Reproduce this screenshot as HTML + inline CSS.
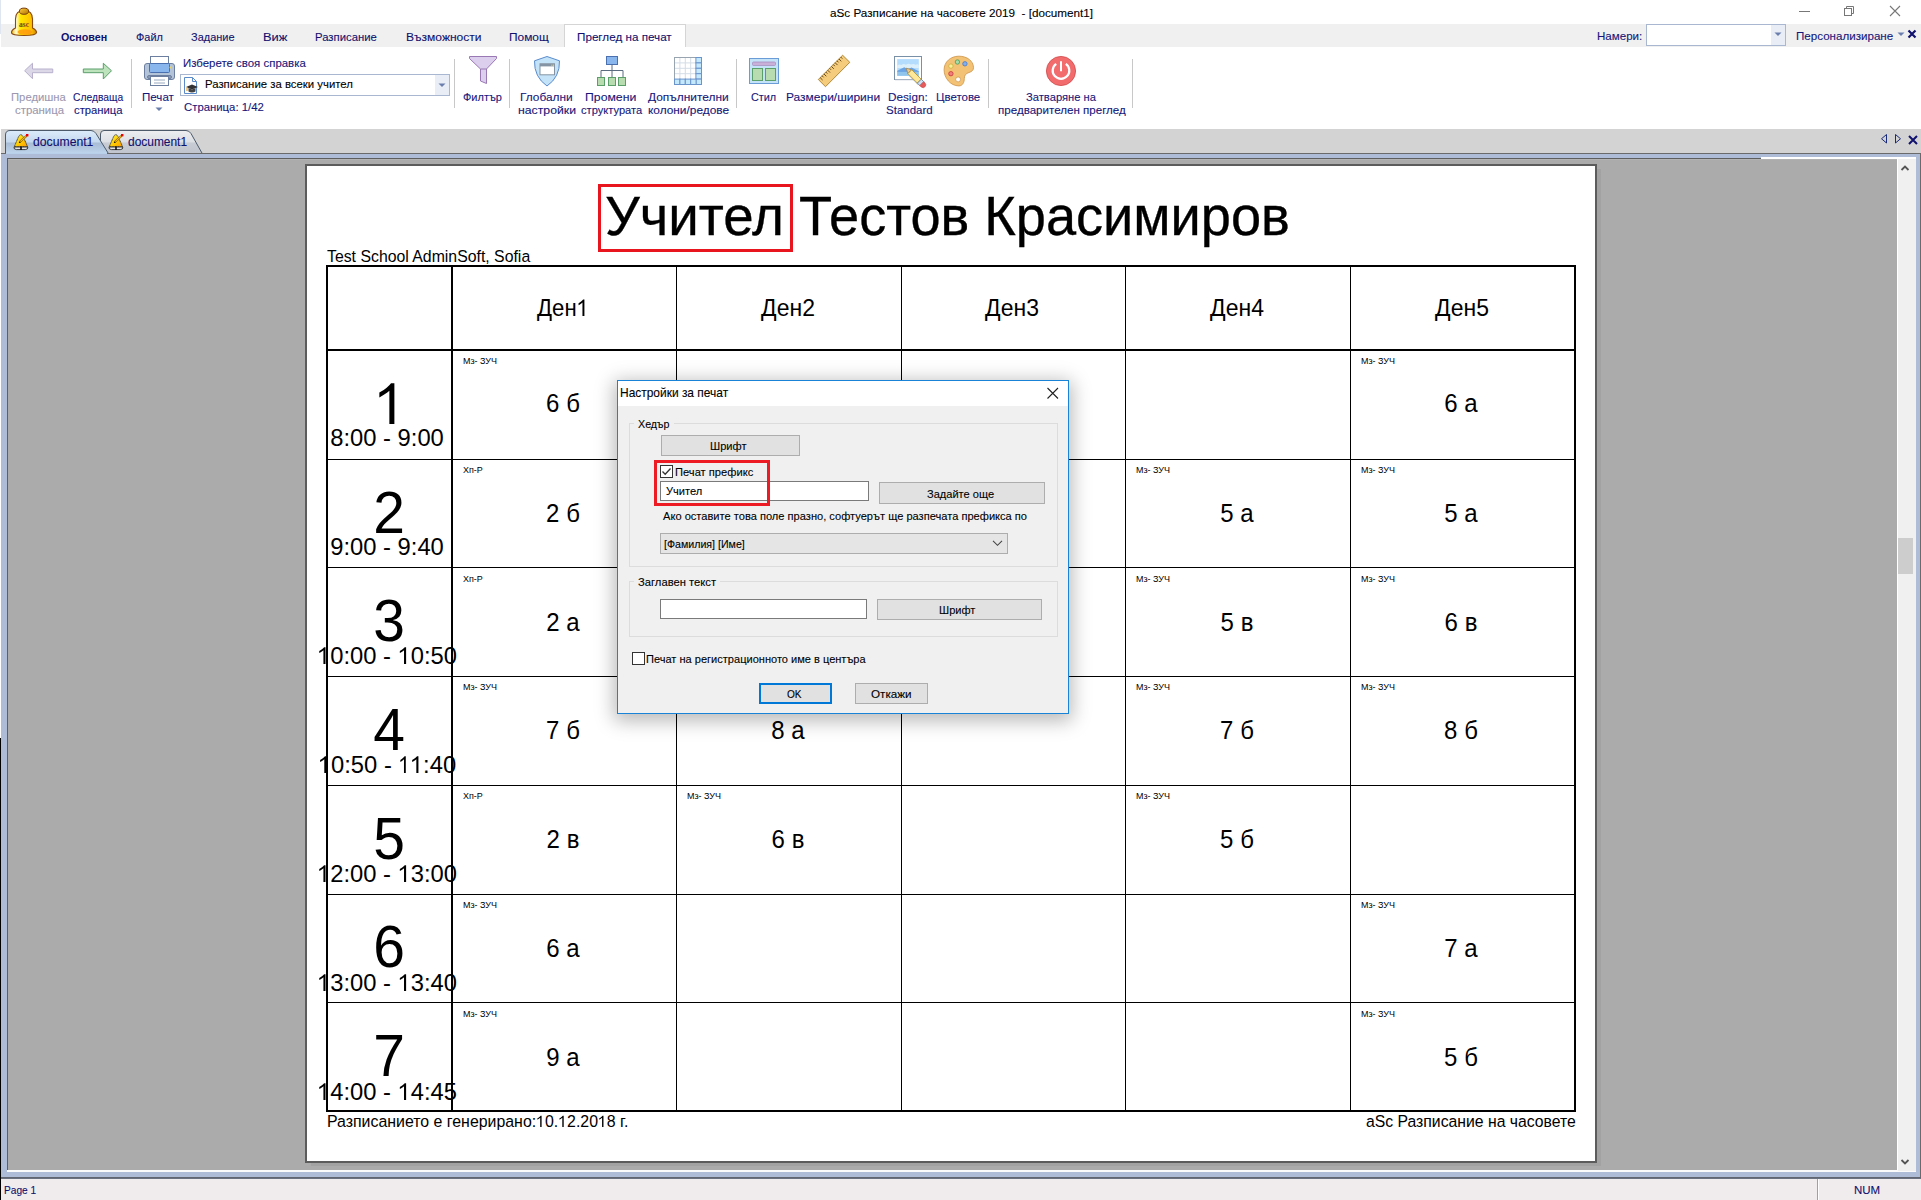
<!DOCTYPE html><html><head><meta charset="utf-8"><style>
html,body{margin:0;padding:0;width:1921px;height:1200px;overflow:hidden;background:#fff;}
body{position:relative;font-family:"Liberation Sans", sans-serif;}
.t{position:absolute;white-space:nowrap;}
.r{position:absolute;box-sizing:border-box;}
.one{color:transparent;}
</style></head><body>
<div class="r" style="left:0px;top:0px;width:1921px;height:24px;background:#fff"></div>
<div class="r" style="left:0px;top:0px;width:1px;height:34px;background:#dfe6ef"></div>
<div class="t" style="left:829.6px;top:7px;font-size:11.7px;line-height:11.7px;color:#000;font-weight:normal;transform:scaleX(1.0006);transform-origin:left center;-webkit-text-stroke:0.1px currentColor;">aSc Разписание на часовете 2019&nbsp; - [document1]</div>
<div class="r" style="left:1799px;top:11px;width:11px;height:1px;background:#777"></div>
<svg class="r" style="left:1843px;top:5px;" width="12" height="12" viewBox="0 0 12 12"><rect x="1.5" y="3.5" width="7" height="7" fill="none" stroke="#777"/><path d="M3.5 3.5V1.5H10.5V8.5H8.5" fill="none" stroke="#777"/></svg>
<svg class="r" style="left:1889px;top:5px;" width="12" height="12" viewBox="0 0 12 12"><path d="M1 1L11 11M11 1L1 11" stroke="#777" stroke-width="1.1"/></svg>
<div class="r" style="left:1px;top:24px;width:1920px;height:23px;background:#f0f0f0"></div>
<div class="r" style="left:564px;top:24px;width:122px;height:23px;background:#fff;border:1px solid #d5d5d5;border-bottom:none"></div>
<div class="t" style="left:61.0px;top:32px;font-size:11.3px;line-height:11.3px;color:#10106e;font-weight:bold;transform:scaleX(0.9500);transform-origin:left center;">Основен</div>
<div class="t" style="left:135.6px;top:32px;font-size:11.3px;line-height:11.3px;color:#10106e;font-weight:normal;transform:scaleX(0.9667);transform-origin:left center;-webkit-text-stroke:0.1px currentColor;">Файл</div>
<div class="t" style="left:191.0px;top:32px;font-size:11.3px;line-height:11.3px;color:#10106e;font-weight:normal;transform:scaleX(0.9711);transform-origin:left center;-webkit-text-stroke:0.1px currentColor;">Задание</div>
<div class="t" style="left:263.26px;top:32px;font-size:11.3px;line-height:11.3px;color:#10106e;font-weight:normal;transform:scaleX(1.1400);transform-origin:left center;-webkit-text-stroke:0.1px currentColor;">Виж</div>
<div class="t" style="left:315.3983606557377px;top:32px;font-size:11.3px;line-height:11.3px;color:#10106e;font-weight:normal;transform:scaleX(1.0016);transform-origin:left center;-webkit-text-stroke:0.1px currentColor;">Разписание</div>
<div class="t" style="left:405.9347826086956px;top:32px;font-size:11.3px;line-height:11.3px;color:#10106e;font-weight:normal;transform:scaleX(1.0652);transform-origin:left center;-webkit-text-stroke:0.1px currentColor;">Възможности</div>
<div class="t" style="left:508.94594594594594px;top:32px;font-size:11.3px;line-height:11.3px;color:#10106e;font-weight:normal;transform:scaleX(1.0541);transform-origin:left center;-webkit-text-stroke:0.1px currentColor;">Помощ</div>
<div class="t" style="left:576.967032967033px;top:32px;font-size:11.3px;line-height:11.3px;color:#10106e;font-weight:normal;transform:scaleX(1.0330);transform-origin:left center;-webkit-text-stroke:0.1px currentColor;">Преглед на печат</div>
<div class="t" style="left:1596.9767441860465px;top:31px;font-size:11.3px;line-height:11.3px;color:#16167a;font-weight:normal;transform:scaleX(1.0233);transform-origin:left center;-webkit-text-stroke:0.1px currentColor;">Намери:</div>
<div class="r" style="left:1646px;top:24px;width:140px;height:22px;background:#fff;border:1px solid #a9b7d1"></div>
<div class="r" style="left:1771px;top:25px;width:14px;height:20px;background:#e9edf5"></div>
<svg class="r" style="left:1774px;top:32px;" width="8" height="5" viewBox="0 0 8 5"><path d="M0.5 0.5H7.5L4 4Z" fill="#6b7fae"/></svg>
<div class="t" style="left:1796.4868421052631px;top:31px;font-size:11.45px;line-height:11.45px;color:#16167a;font-weight:normal;transform:scaleX(1.0132);transform-origin:left center;-webkit-text-stroke:0.1px currentColor;">Персонализиране</div>
<svg class="r" style="left:1897px;top:32px;" width="8" height="5" viewBox="0 0 8 5"><path d="M0.5 0.5H7.5L4 4Z" fill="#6b7fae"/></svg>
<svg class="r" style="left:1907px;top:29px;" width="10" height="10" viewBox="0 0 10 10"><path d="M1.5 1.5L8.5 8.5M8.5 1.5L1.5 8.5" stroke="#10106e" stroke-width="2.2"/></svg>
<svg class="r" style="left:8px;top:4px;" width="32" height="36" viewBox="0 0 32 36">
<defs>
<linearGradient id="bb" x1="0" y1="0" x2="1" y2="0"><stop offset="0" stop-color="#e8b800"/><stop offset="0.18" stop-color="#fffbe0"/><stop offset="0.35" stop-color="#ffe800"/><stop offset="0.8" stop-color="#ffc000"/><stop offset="1" stop-color="#d08800"/></linearGradient>
<linearGradient id="bk" x1="0" y1="0" x2="1" y2="1"><stop offset="0" stop-color="#ffd040"/><stop offset="1" stop-color="#b07000"/></linearGradient>
</defs>
<path d="M7.5 24V15Q7.5 6.5 16 6.5Q24.5 6.5 24.5 15V24Q28.5 26 28.5 28.5Q28.5 31.5 16 31.5Q3.5 31.5 3.5 28.5Q3.5 26 7.5 24Z" fill="url(#bb)" stroke="#8a4a10" stroke-width="1.1"/>
<ellipse cx="17" cy="28" rx="7.5" ry="2.8" fill="#ff9a10" opacity="0.85"/>
<ellipse cx="16" cy="7.2" rx="4.6" ry="3.1" fill="url(#bk)" stroke="#7a4010" stroke-width="1"/>
<text x="16" y="22.6" font-family="Liberation Serif" font-size="7.5" font-weight="bold" fill="#7a4818" text-anchor="middle">asc</text></svg>
<svg class="r" style="left:22px;top:60px;" width="34" height="22" viewBox="0 0 34 22"><path d="M2.6 10.75L10.5 3.25V9H30.75V12.7H10.5V18.7Z" fill="#dcd8e8" stroke="#b8b0cc" stroke-width="1"/></svg>
<svg class="r" style="left:80px;top:60px;" width="34" height="22" viewBox="0 0 34 22"><path d="M31.5 10.75L23.3 3.25V9H3.3V12.7H23.3V19Z" fill="#bde3bd" stroke="#5a9e6a" stroke-width="1"/></svg>
<div class="t" style="left:10.50909090909091px;top:92px;font-size:11.4px;line-height:11.4px;color:#9c98b0;font-weight:normal;transform:scaleX(0.9909);transform-origin:left center;-webkit-text-stroke:0.1px currentColor;">Предишна</div>
<div class="t" style="left:15.0px;top:105px;font-size:11.4px;line-height:11.4px;color:#9c98b0;font-weight:normal;-webkit-text-stroke:0.1px currentColor;">страница</div>
<div class="t" style="left:72.5px;top:92px;font-size:11.4px;line-height:11.4px;color:#16167a;font-weight:normal;transform:scaleX(0.9018);transform-origin:left center;-webkit-text-stroke:0.1px currentColor;">Следваща</div>
<div class="t" style="left:74.0px;top:105px;font-size:11.4px;line-height:11.4px;color:#16167a;font-weight:normal;transform:scaleX(0.9898);transform-origin:left center;-webkit-text-stroke:0.1px currentColor;">страница</div>
<div class="r" style="left:131px;top:59px;width:1px;height:49px;background:#c8c8c8"></div>
<svg class="r" style="left:143px;top:55px;" width="33" height="32" viewBox="0 0 33 32">
<rect x="7.5" y="1.5" width="18" height="8" fill="#fff" stroke="#6c7fa0"/>
<rect x="1.5" y="8.5" width="30" height="16" rx="2.5" fill="#b4c4d8" stroke="#6c7fa0"/>
<rect x="6.5" y="8.5" width="20" height="9" rx="1" fill="#8ab6ee" stroke="#4a70b0"/>
<rect x="4.5" y="20.5" width="24" height="3" rx="1.5" fill="#8a9ab0" stroke="#6c7fa0"/>
<rect x="7.5" y="21.5" width="18" height="9" fill="#fff" stroke="#6c7fa0"/>
<path d="M11 25H22M11 28H22" stroke="#9aaac0" stroke-width="1"/>
<circle cx="27.5" cy="12.5" r="1" fill="#f4d45a"/></svg>
<div class="t" style="left:142.48387096774192px;top:92px;font-size:11.4px;line-height:11.4px;color:#16167a;font-weight:normal;transform:scaleX(1.0161);transform-origin:left center;-webkit-text-stroke:0.1px currentColor;">Печат</div>
<svg class="r" style="left:155px;top:107px;" width="8" height="5" viewBox="0 0 8 5"><path d="M0.5 0.5H7.5L4 4Z" fill="#6b7fae"/></svg>
<div class="t" style="left:183.41370967741935px;top:57px;font-size:11.6px;line-height:11.6px;color:#16167a;font-weight:normal;transform:scaleX(0.9863);transform-origin:left center;-webkit-text-stroke:0.1px currentColor;">Изберете своя справка</div>
<div class="r" style="left:180px;top:74px;width:270px;height:22px;background:#fff;border:1px solid #a9b7d1"></div>
<div class="r" style="left:435px;top:75px;width:14px;height:20px;background:#e9edf5"></div>
<svg class="r" style="left:438px;top:83px;" width="8" height="5" viewBox="0 0 8 5"><path d="M0.5 0.5H7.5L4 4Z" fill="#6b7fae"/></svg>
<svg class="r" style="left:183px;top:77px;" width="17" height="17" viewBox="0 0 17 17">
<path d="M1.5 0.5H9.5L13.5 4.5V16.5H1.5Z" fill="#fff" stroke="#5a8ccc"/>
<path d="M9.5 0.5V4.5H13.5" fill="none" stroke="#5a8ccc"/>
<path d="M3 10L9 7.5L15 10L9 12.5Z" fill="#333"/>
<path d="M5.5 11V14.5Q9 16.5 12.5 14.5V11L9 12.5Z" fill="#444"/>
<path d="M4 10.5V14" stroke="#f0a020" stroke-width="1.2"/></svg>
<div class="t" style="left:204.59383561643835px;top:79px;font-size:11.3px;line-height:11.3px;color:#000;font-weight:normal;transform:scaleX(1.0062);transform-origin:left center;-webkit-text-stroke:0.1px currentColor;">Разписание за всеки учител</div>
<div class="t" style="left:184.4px;top:102px;font-size:11.3px;line-height:11.3px;color:#16167a;font-weight:normal;transform:scaleX(1.0044);transform-origin:left center;-webkit-text-stroke:0.1px currentColor;">Страница: 1/42</div>
<div class="r" style="left:454px;top:59px;width:1px;height:49px;background:#c8c8c8"></div>
<svg class="r" style="left:466px;top:54px;" width="34" height="34" viewBox="0 0 34 34">
<path d="M3.5 2.5H30.5V4.5L20.5 15V29.5L14.5 27V15L3.5 4.5Z" fill="#dccfee" stroke="#9a78b4"/>
<path d="M14.5 15H20.5" stroke="#9a78b4"/></svg>
<div class="t" style="left:462.8px;top:92px;font-size:11.4px;line-height:11.4px;color:#16167a;font-weight:normal;transform:scaleX(0.9650);transform-origin:left center;-webkit-text-stroke:0.1px currentColor;">Филтър</div>
<div class="r" style="left:509px;top:59px;width:1px;height:49px;background:#c8c8c8"></div>
<svg class="r" style="left:532px;top:54px;" width="30" height="34" viewBox="0 0 30 34">
<path d="M15 2.5L27.5 6.8Q28 23 15 32Q2 23 2.5 6.8Z" fill="#c4e2f8" stroke="#5a8ccc"/>
<rect x="8" y="9.8" width="14.5" height="11" fill="#fff" stroke="#8494a4"/>
<rect x="8" y="9.8" width="14.5" height="2.6" fill="#8494a4"/>
<rect x="19.4" y="10.6" width="1" height="1.2" fill="#e8d870"/><rect x="21" y="10.6" width="1" height="1.2" fill="#e8d870"/></svg>
<div class="t" style="left:519.9591836734694px;top:92px;font-size:11.4px;line-height:11.4px;color:#16167a;font-weight:normal;transform:scaleX(1.0408);transform-origin:left center;-webkit-text-stroke:0.1px currentColor;">Глобални</div>
<div class="t" style="left:518.0px;top:105px;font-size:11.4px;line-height:11.4px;color:#16167a;font-weight:normal;transform:scaleX(1.0755);transform-origin:left center;-webkit-text-stroke:0.1px currentColor;">настройки</div>
<svg class="r" style="left:596px;top:54px;" width="32" height="34" viewBox="0 0 32 34">
<rect x="10.5" y="2.5" width="11" height="8" fill="#8ab6ee" stroke="#4a70b0"/>
<path d="M16 10.5V23M5 23V16.5H27V23" fill="none" stroke="#5c6c80" stroke-width="1"/>
<rect x="1.5" y="23.5" width="7" height="8" fill="#b8dcb0" stroke="#5a9e6a"/>
<rect x="12.5" y="23.5" width="7" height="8" fill="#b8dcb0" stroke="#5a9e6a"/>
<rect x="22.5" y="23.5" width="7" height="8" fill="#b8dcb0" stroke="#5a9e6a"/></svg>
<div class="t" style="left:585.1739130434783px;top:92px;font-size:11.4px;line-height:11.4px;color:#16167a;font-weight:normal;transform:scaleX(1.0761);transform-origin:left center;-webkit-text-stroke:0.1px currentColor;">Промени</div>
<div class="t" style="left:580.5px;top:105px;font-size:11.4px;line-height:11.4px;color:#16167a;font-weight:normal;transform:scaleX(0.9762);transform-origin:left center;-webkit-text-stroke:0.1px currentColor;">структурата</div>
<svg class="r" style="left:674px;top:57px;" width="28" height="28" viewBox="0 0 28 28"><rect x="0.5" y="0.5" width="27" height="27" fill="#fff" stroke="#98a4b0"/><path d="M5.9 1V22M1 5.9H22" stroke="#d4dde6" stroke-width="1"/><path d="M11.3 1V22M1 11.3H22" stroke="#d4dde6" stroke-width="1"/><path d="M16.7 1V22M1 16.7H22" stroke="#d4dde6" stroke-width="1"/><rect x="21.9" y="0.5" width="5.6" height="5.4" fill="#c4e8fc" stroke="#6a94cc" stroke-width="1"/><rect x="21.9" y="5.9" width="5.6" height="5.4" fill="#c4e8fc" stroke="#6a94cc" stroke-width="1"/><rect x="21.9" y="11.3" width="5.6" height="5.4" fill="#c4e8fc" stroke="#6a94cc" stroke-width="1"/><rect x="21.9" y="16.7" width="5.6" height="5.4" fill="#c4e8fc" stroke="#6a94cc" stroke-width="1"/><rect x="21.9" y="22.1" width="5.6" height="5.4" fill="#c4e8fc" stroke="#6a94cc" stroke-width="1"/><rect x="0.5" y="22.1" width="5.4" height="5.4" fill="#c4e8fc" stroke="#6a94cc" stroke-width="1"/><rect x="5.9" y="22.1" width="5.4" height="5.4" fill="#c4e8fc" stroke="#6a94cc" stroke-width="1"/><rect x="11.3" y="22.1" width="5.4" height="5.4" fill="#c4e8fc" stroke="#6a94cc" stroke-width="1"/><rect x="16.7" y="22.1" width="5.4" height="5.4" fill="#c4e8fc" stroke="#6a94cc" stroke-width="1"/></svg>
<div class="t" style="left:647.5px;top:92px;font-size:11.4px;line-height:11.4px;color:#16167a;font-weight:normal;transform:scaleX(1.0455);transform-origin:left center;-webkit-text-stroke:0.1px currentColor;">Допълнителни</div>
<div class="t" style="left:647.5px;top:105px;font-size:11.4px;line-height:11.4px;color:#16167a;font-weight:normal;transform:scaleX(1.0417);transform-origin:left center;-webkit-text-stroke:0.1px currentColor;">колони/редове</div>
<div class="r" style="left:736px;top:59px;width:1px;height:49px;background:#c8c8c8"></div>
<svg class="r" style="left:748px;top:57px;" width="32" height="28" viewBox="0 0 32 28">
<rect x="1.5" y="1.5" width="29" height="25" fill="#c4e2f8" stroke="#6a9cd8"/>
<rect x="4.5" y="5" width="23" height="3.5" rx="1" fill="#c8b0d8" stroke="#a890c0" stroke-width="0.8"/>
<rect x="4.5" y="11.5" width="10" height="12" fill="#b8dcb0" stroke="#5a9e6a"/>
<rect x="17.5" y="11.5" width="10" height="12" fill="#b8dcb0" stroke="#5a9e6a"/></svg>
<div class="t" style="left:751.0px;top:92px;font-size:11.4px;line-height:11.4px;color:#16167a;font-weight:normal;transform:scaleX(0.9519);transform-origin:left center;-webkit-text-stroke:0.1px currentColor;">Стил</div>
<svg class="r" style="left:817px;top:54px;" width="34" height="35" viewBox="0 0 34 35"><path d="M1.3 25.5L25.6 1.2L32.8 8.3L8.5 32.7Z" fill="#f4cc7c" stroke="#a88030" stroke-width="0.9"/><path d="M3.17 23.63l2.40 2.40" stroke="#6a4818" stroke-width="1"/><path d="M5.04 21.76l1.56 1.56" stroke="#6a4818" stroke-width="1"/><path d="M6.91 19.89l2.40 2.40" stroke="#6a4818" stroke-width="1"/><path d="M8.78 18.02l1.56 1.56" stroke="#6a4818" stroke-width="1"/><path d="M10.65 16.15l2.40 2.40" stroke="#6a4818" stroke-width="1"/><path d="M12.52 14.28l1.56 1.56" stroke="#6a4818" stroke-width="1"/><path d="M14.38 12.42l2.40 2.40" stroke="#6a4818" stroke-width="1"/><path d="M16.25 10.55l1.56 1.56" stroke="#6a4818" stroke-width="1"/><path d="M18.12 8.68l2.40 2.40" stroke="#6a4818" stroke-width="1"/><path d="M19.99 6.81l1.56 1.56" stroke="#6a4818" stroke-width="1"/><path d="M21.86 4.94l2.40 2.40" stroke="#6a4818" stroke-width="1"/><path d="M23.73 3.07l1.56 1.56" stroke="#6a4818" stroke-width="1"/></svg>
<div class="t" style="left:786.4488636363636px;top:92px;font-size:11.4px;line-height:11.4px;color:#16167a;font-weight:normal;transform:scaleX(1.0511);transform-origin:left center;-webkit-text-stroke:0.1px currentColor;">Размери/ширини</div>
<svg class="r" style="left:885px;top:50px;" width="45" height="42" viewBox="0 0 45 42">
<rect x="9.5" y="6.5" width="27" height="23" fill="#fff" stroke="#7890a8"/>
<rect x="10" y="29" width="27" height="1.2" fill="#a8b4c4"/>
<rect x="12.2" y="9.1" width="21.6" height="16.7" fill="#b4dcfc"/>
<path d="M12.2 15.5Q14.5 13.6 16.5 15Q18.5 13.2 21 14.8Q23.5 13 26 14.6Q28.5 13.2 30.5 14.8Q32.5 13.6 33.8 15V18H12.2Z" fill="#dcf0fc"/>
<path d="M12.2 20.8L19.3 17.2L22.8 19.2L26.5 17.4L33.8 21.2V22H12.2Z" fill="#6aa4e4"/>
<rect x="12.2" y="21.9" width="21.6" height="3.9" fill="#90c4ec"/>
<path d="M23.5 25.8L33 35.3L36.5 31.8L33.8 29.1V25.8Z" fill="#a0b0c0" opacity="0.55"/>
<path d="M21.3 18.2L22.86 23.64L26.74 19.76Z" fill="#f4c888" stroke="#a08040" stroke-width="0.7"/>
<path d="M22.86 23.64L32.36 33.14L36.24 29.26L26.74 19.76Z" fill="#fce898" stroke="#b09030" stroke-width="0.8"/>
<path d="M32.36 33.14L34.86 35.64L38.74 31.76L36.24 29.26Z" fill="#d0e0f4" stroke="#607890" stroke-width="0.8"/>
<path d="M34.86 35.64L36.2 37Q38.5 38.6 40.2 36.6Q41.6 34.6 40 33L38.74 31.76Z" fill="#e85a5a" stroke="#c04040" stroke-width="0.6"/></svg>
<div class="t" style="left:888.472972972973px;top:92px;font-size:11.4px;line-height:11.4px;color:#16167a;font-weight:normal;transform:scaleX(1.0270);transform-origin:left center;-webkit-text-stroke:0.1px currentColor;">Design:</div>
<div class="t" style="left:885.5px;top:105px;font-size:11.4px;line-height:11.4px;color:#16167a;font-weight:normal;transform:scaleX(1.0109);transform-origin:left center;-webkit-text-stroke:0.1px currentColor;">Standard</div>
<svg class="r" style="left:942px;top:54px;" width="34" height="34" viewBox="0 0 34 34">
<path d="M16.9 2.2C25 2.2 31.5 7 31.5 13.7C31.5 16.2 29.8 17.6 27 18.5C24 19.5 22.3 21 22.3 24.5C22.3 28 20.8 31.9 16.9 31.9C8.5 31.9 2.1 24 2.1 15.8C2.1 8 8.5 2.2 16.9 2.2Z" fill="#f4c274" stroke="#d09a50" stroke-width="0.9"/>
<circle cx="15.4" cy="8" r="2.2" fill="#a8dca8" stroke="#4a9a5a" stroke-width="0.8"/>
<circle cx="22.9" cy="9.8" r="2.2" fill="#80aef0" stroke="#4a78c8" stroke-width="0.8"/>
<circle cx="8.9" cy="12.1" r="2.2" fill="#f8f098" stroke="#c8b040" stroke-width="0.8"/>
<circle cx="8.9" cy="19.7" r="2.2" fill="#f08080" stroke="#c83838" stroke-width="0.8"/>
<circle cx="16.1" cy="25.4" r="2.5" fill="#fff" stroke="#d09a50" stroke-width="0.8"/></svg>
<div class="t" style="left:936.4941860465116px;top:92px;font-size:11.4px;line-height:11.4px;color:#16167a;font-weight:normal;transform:scaleX(1.0058);transform-origin:left center;-webkit-text-stroke:0.1px currentColor;">Цветове</div>
<div class="r" style="left:988px;top:59px;width:1px;height:49px;background:#c8c8c8"></div>
<svg class="r" style="left:1045px;top:55px;" width="32" height="32" viewBox="0 0 32 32">
<circle cx="16" cy="16" r="14.6" fill="#f26c6e" stroke="#d04848" stroke-width="0.8"/>
<path d="M11.2 8.8A8.3 8.3 0 1 0 20.8 8.8" fill="none" stroke="#fff" stroke-width="2.2"/>
<path d="M16 6.2V16.2" stroke="#fff" stroke-width="2"/></svg>
<div class="t" style="left:1026.0px;top:92px;font-size:11.4px;line-height:11.4px;color:#16167a;font-weight:normal;transform:scaleX(0.9826);transform-origin:left center;-webkit-text-stroke:0.1px currentColor;">Затваряне на</div>
<div class="t" style="left:997.5px;top:105px;font-size:11.4px;line-height:11.4px;color:#16167a;font-weight:normal;transform:scaleX(1.0159);transform-origin:left center;-webkit-text-stroke:0.1px currentColor;">предварителен преглед</div>
<div class="r" style="left:1132px;top:59px;width:1px;height:49px;background:#c8c8c8"></div>
<div class="r" style="left:1px;top:129px;width:1920px;height:24px;background:#d3d3d3"></div>
<div class="r" style="left:0px;top:47px;width:1px;height:106px;background:#fff"></div>
<svg class="r" style="left:98px;top:129px;" width="108" height="26" viewBox="0 0 108 26">
<defs><linearGradient id="g2" x1="0" y1="0" x2="0" y2="1">
<stop offset="0" stop-color="#eceef0"/><stop offset="0.5" stop-color="#dcdfe4"/><stop offset="0.52" stop-color="#c8ccd4"/><stop offset="1" stop-color="#c0c5ce"/></defs>
<path d="M2.5 25V5Q2.5 1.5 6 1.5H88Q91 1.5 93 4.5L104.5 25Z" fill="url(#g2)" stroke="#4c5a6a" stroke-width="1"/></svg>
<svg class="r" style="left:4px;top:129px;" width="108" height="27" viewBox="0 0 108 27">
<defs><linearGradient id="g1" x1="0" y1="0" x2="0" y2="1">
<stop offset="0" stop-color="#dcecfc"/><stop offset="0.48" stop-color="#c4d8ee"/><stop offset="0.5" stop-color="#a8bcd4"/><stop offset="1" stop-color="#c0d8f0"/></defs>
<path d="M1.5 26V6Q1.5 1.5 6 1.5H87Q90 1.5 92 4.5L105 25.5V26Z" fill="url(#g1)" stroke="#4c5a6a" stroke-width="1"/></svg>
<div class="t" style="left:32.5px;top:136px;font-size:12.0px;line-height:12.0px;color:#10106e;font-weight:normal;transform:scaleX(1.0169);transform-origin:left center;-webkit-text-stroke:0.1px currentColor;">document1</div>
<div class="t" style="left:127.7px;top:136px;font-size:12.0px;line-height:12.0px;color:#10106e;font-weight:normal;transform:scaleX(0.9949);transform-origin:left center;-webkit-text-stroke:0.1px currentColor;">document1</div>
<svg class="r" style="left:13px;top:134px;" width="17" height="17" viewBox="0 0 17 17">
<defs><linearGradient id="tbg" x1="0" y1="0" x2="1" y2="1"><stop offset="0" stop-color="#fff040"/><stop offset="0.5" stop-color="#ffd000"/><stop offset="1" stop-color="#ff9800"/></linearGradient></defs>
<path d="M7.8 0.7Q9.2 0.7 10.5 3.5L13.2 9.5Q14 11.5 14.6 12.8H1.2Q1.8 11.5 2.6 9.5L5.2 3.5Q6.4 0.7 7.8 0.7Z" fill="url(#tbg)" stroke="#2a2a2a" stroke-width="0.9" stroke-dasharray="1.2 0.4"/>
<path d="M1 13Q0.6 15.6 3.5 15.6H12.3Q15.2 15.6 14.8 13Z" fill="#e4e4e4" stroke="#2a2a2a" stroke-width="0.9"/>
<path d="M8 12.6V16" stroke="#111" stroke-width="1.6"/>
<path d="M6.8 8L13.6 1.8" stroke="#a07000" stroke-width="2.2"/>
<path d="M6.8 8L13.6 1.8" stroke="#f0c030" stroke-width="1"/>
<path d="M5.8 8.6Q6 7.4 7.2 7.4L7.6 8.6Q6.8 9.4 5.8 8.6Z" fill="#000"/>
<rect x="13" y="0" width="2.4" height="2.4" fill="#f00000"/></svg>
<svg class="r" style="left:108px;top:134px;" width="17" height="17" viewBox="0 0 17 17">
<defs><linearGradient id="tbg" x1="0" y1="0" x2="1" y2="1"><stop offset="0" stop-color="#fff040"/><stop offset="0.5" stop-color="#ffd000"/><stop offset="1" stop-color="#ff9800"/></linearGradient></defs>
<path d="M7.8 0.7Q9.2 0.7 10.5 3.5L13.2 9.5Q14 11.5 14.6 12.8H1.2Q1.8 11.5 2.6 9.5L5.2 3.5Q6.4 0.7 7.8 0.7Z" fill="url(#tbg)" stroke="#2a2a2a" stroke-width="0.9" stroke-dasharray="1.2 0.4"/>
<path d="M1 13Q0.6 15.6 3.5 15.6H12.3Q15.2 15.6 14.8 13Z" fill="#e4e4e4" stroke="#2a2a2a" stroke-width="0.9"/>
<path d="M8 12.6V16" stroke="#111" stroke-width="1.6"/>
<path d="M6.8 8L13.6 1.8" stroke="#a07000" stroke-width="2.2"/>
<path d="M6.8 8L13.6 1.8" stroke="#f0c030" stroke-width="1"/>
<path d="M5.8 8.6Q6 7.4 7.2 7.4L7.6 8.6Q6.8 9.4 5.8 8.6Z" fill="#000"/>
<rect x="13" y="0" width="2.4" height="2.4" fill="#f00000"/></svg>
<svg class="r" style="left:1880px;top:133px;" width="9" height="12" viewBox="0 0 9 12"><path d="M6.5 1.5V10L1.5 5.75Z" fill="none" stroke="#1a2a7a" stroke-width="1"/></svg>
<svg class="r" style="left:1894px;top:133px;" width="9" height="12" viewBox="0 0 9 12"><path d="M1.5 1.5V10L6.5 5.75Z" fill="none" stroke="#1a2a7a" stroke-width="1"/></svg>
<svg class="r" style="left:1907px;top:134px;" width="13" height="12" viewBox="0 0 13 12"><path d="M2 2L10 10M10 2L2 10" stroke="#10106e" stroke-width="2"/></svg>
<div class="r" style="left:1px;top:153px;width:1920px;height:1px;background:#6a6a6a"></div>
<div class="r" style="left:6px;top:153px;width:101px;height:1px;background:#b8d0ea"></div>
<div class="r" style="left:1px;top:154px;width:1920px;height:1024px;background:#aebcd8"></div>
<div class="r" style="left:0px;top:738px;width:1px;height:462px;background:#000"></div>
<div class="r" style="left:1920px;top:153px;width:1px;height:1025px;background:#6a6a6a"></div>
<div class="r" style="left:7px;top:158px;width:1909px;height:1014px;background:#ababab"></div>
<div class="r" style="left:7px;top:158px;width:1754px;height:1px;background:#5e5e5e"></div>
<div class="r" style="left:1761px;top:157px;width:155px;height:2px;background:#fff"></div>
<div class="r" style="left:7px;top:158px;width:1px;height:1012px;background:#606060"></div>
<div class="r" style="left:7px;top:1170px;width:1909px;height:2px;background:#fbfbfb"></div>
<div class="r" style="left:1px;top:1177px;width:1920px;height:2px;background:linear-gradient(#5c6068,#6e7688)"></div>
<div class="r" style="left:8px;top:159px;width:1889px;height:1px;background:#b3b3b3"></div>
<div class="r" style="left:1897px;top:159px;width:1px;height:1011px;background:#fff"></div>
<div class="r" style="left:1898px;top:159px;width:18px;height:1012px;background:#f0f0f0"></div>
<div class="r" style="left:1898px;top:538px;width:15px;height:36px;background:#cdcdcd"></div>
<svg class="r" style="left:1900px;top:163px;" width="10" height="10" viewBox="0 0 10 10"><path d="M1.5 7L5 3.5L8.5 7" fill="none" stroke="#555" stroke-width="1.8"/></svg>
<svg class="r" style="left:1900px;top:1157px;" width="10" height="10" viewBox="0 0 10 10"><path d="M1.5 3L5 6.5L8.5 3" fill="none" stroke="#555" stroke-width="1.8"/></svg>
<div class="r" style="left:1px;top:1179px;width:1920px;height:21px;background:#f0eced"></div>
<div class="t" style="left:3.515625px;top:1186px;font-size:10.3px;line-height:10.3px;color:#10106e;font-weight:normal;transform:scaleX(0.9844);transform-origin:left center;-webkit-text-stroke:0.1px currentColor;">Page 1</div>
<div class="r" style="left:1817px;top:1179px;width:1px;height:21px;background:#a0a0a0"></div>
<div class="r" style="left:1818px;top:1179px;width:1px;height:21px;background:#fff"></div>
<div class="t" style="left:1853.9583333333333px;top:1185px;font-size:11.0px;line-height:11.0px;color:#10106e;font-weight:normal;transform:scaleX(1.0417);transform-origin:left center;-webkit-text-stroke:0.1px currentColor;">NUM</div>
<div class="r" style="left:1597px;top:169px;width:4px;height:997px;background:#a2a2a2"></div>
<div class="r" style="left:311px;top:1163px;width:1290px;height:3px;background:#a2a2a2"></div>
<div class="r" style="left:305px;top:164px;width:1292px;height:999px;background:#fff;border:2px solid #5c5c5c"></div>
<div class="r" style="left:598px;top:184px;width:195px;height:68px;border:3px solid #e8141e"></div>
<div class="t" style="left:605.3022471910112px;top:188px;font-size:56.198px;line-height:56.198px;color:#000;font-weight:normal;transform:scaleX(0.9739);transform-origin:left center;-webkit-text-stroke:0.35px #000;">Учител</div>
<div class="t" style="left:799.0365612648221px;top:188px;font-size:56.198px;line-height:56.198px;color:#000;font-weight:normal;transform:scaleX(0.9634);transform-origin:left center;-webkit-text-stroke:0.35px #000;">Тестов Красимиров</div>
<div class="t" style="left:326.9px;top:248px;font-size:16.495px;line-height:16.495px;color:#000;font-weight:normal;transform:scaleX(0.9599);transform-origin:left center;">Test School AdminSoft, Sofia</div>
<div class="r" style="left:326px;top:265px;width:1250px;height:2px;background:#000"></div>
<div class="r" style="left:326px;top:1110px;width:1250px;height:2px;background:#000"></div>
<div class="r" style="left:326px;top:265px;width:2px;height:847px;background:#000"></div>
<div class="r" style="left:1574px;top:265px;width:2px;height:847px;background:#000"></div>
<div class="r" style="left:451px;top:265px;width:2px;height:847px;background:#000"></div>
<div class="r" style="left:326px;top:349px;width:1250px;height:2px;background:#000"></div>
<div class="r" style="left:676px;top:265px;width:1px;height:847px;background:#000"></div>
<div class="r" style="left:901px;top:265px;width:1px;height:847px;background:#000"></div>
<div class="r" style="left:1125px;top:265px;width:1px;height:847px;background:#000"></div>
<div class="r" style="left:1350px;top:265px;width:1px;height:847px;background:#000"></div>
<div class="r" style="left:326px;top:459px;width:1250px;height:1px;background:#000"></div>
<div class="r" style="left:326px;top:567px;width:1250px;height:1px;background:#000"></div>
<div class="r" style="left:326px;top:676px;width:1250px;height:1px;background:#000"></div>
<div class="r" style="left:326px;top:785px;width:1250px;height:1px;background:#000"></div>
<div class="r" style="left:326px;top:894px;width:1250px;height:1px;background:#000"></div>
<div class="r" style="left:326px;top:1002px;width:1250px;height:1px;background:#000"></div>
<div class="t" style="left:462.50px;width:200px;text-align:center;top:296px;font-size:23.936px;line-height:23.936px;color:#000;font-weight:normal;transform:scaleX(0.9274);transform-origin:center center;">Ден<span id="o0" class="one">1</span></div>
<div class="t" style="left:687.50px;width:200px;text-align:center;top:296px;font-size:23.936px;line-height:23.936px;color:#000;font-weight:normal;transform:scaleX(0.9610);transform-origin:center center;">Ден2</div>
<div class="t" style="left:912.00px;width:200px;text-align:center;top:296px;font-size:23.936px;line-height:23.936px;color:#000;font-weight:normal;transform:scaleX(0.9610);transform-origin:center center;">Ден3</div>
<div class="t" style="left:1136.50px;width:200px;text-align:center;top:296px;font-size:23.936px;line-height:23.936px;color:#000;font-weight:normal;transform:scaleX(0.9610);transform-origin:center center;">Ден4</div>
<div class="t" style="left:1362.00px;width:200px;text-align:center;top:296px;font-size:23.936px;line-height:23.936px;color:#000;font-weight:normal;transform:scaleX(0.9610);transform-origin:center center;">Ден5</div>
<div class="t" style="left:329.00px;width:120px;text-align:center;top:374px;font-size:59.32px;line-height:59.32px;color:#000;font-weight:normal;transform:scaleX(0.9610);transform-origin:center center;"><span id="o1" class="one">1</span></div>
<div class="t" style="left:286.70px;width:200px;text-align:center;top:426px;font-size:24.456px;line-height:24.456px;color:#000;font-weight:normal;transform:scaleX(0.9725);transform-origin:center center;">8:00 - 9:00</div>
<div class="t" style="left:329.00px;width:120px;text-align:center;top:483px;font-size:59.32px;line-height:59.32px;color:#000;font-weight:normal;transform:scaleX(0.9610);transform-origin:center center;">2</div>
<div class="t" style="left:286.70px;width:200px;text-align:center;top:535px;font-size:24.456px;line-height:24.456px;color:#000;font-weight:normal;transform:scaleX(0.9725);transform-origin:center center;">9:00 - 9:40</div>
<div class="t" style="left:329.00px;width:120px;text-align:center;top:591px;font-size:59.32px;line-height:59.32px;color:#000;font-weight:normal;transform:scaleX(0.9610);transform-origin:center center;">3</div>
<div class="t" style="left:286.70px;width:200px;text-align:center;top:644px;font-size:24.456px;line-height:24.456px;color:#000;font-weight:normal;transform:scaleX(0.9725);transform-origin:center center;"><span id="o2" class="one">1</span>0:00 - <span id="o3" class="one">1</span>0:50</div>
<div class="t" style="left:329.00px;width:120px;text-align:center;top:700px;font-size:59.32px;line-height:59.32px;color:#000;font-weight:normal;transform:scaleX(0.9610);transform-origin:center center;">4</div>
<div class="t" style="left:286.70px;width:200px;text-align:center;top:753px;font-size:24.456px;line-height:24.456px;color:#000;font-weight:normal;transform:scaleX(0.9725);transform-origin:center center;"><span id="o4" class="one">1</span>0:50 - <span id="o5" class="one">1</span><span id="o6" class="one">1</span>:40</div>
<div class="t" style="left:329.00px;width:120px;text-align:center;top:809px;font-size:59.32px;line-height:59.32px;color:#000;font-weight:normal;transform:scaleX(0.9610);transform-origin:center center;">5</div>
<div class="t" style="left:286.70px;width:200px;text-align:center;top:862px;font-size:24.456px;line-height:24.456px;color:#000;font-weight:normal;transform:scaleX(0.9725);transform-origin:center center;"><span id="o7" class="one">1</span>2:00 - <span id="o8" class="one">1</span>3:00</div>
<div class="t" style="left:329.00px;width:120px;text-align:center;top:917px;font-size:59.32px;line-height:59.32px;color:#000;font-weight:normal;transform:scaleX(0.9610);transform-origin:center center;">6</div>
<div class="t" style="left:286.70px;width:200px;text-align:center;top:971px;font-size:24.456px;line-height:24.456px;color:#000;font-weight:normal;transform:scaleX(0.9725);transform-origin:center center;"><span id="o9" class="one">1</span>3:00 - <span id="o10" class="one">1</span>3:40</div>
<div class="t" style="left:329.00px;width:120px;text-align:center;top:1026px;font-size:59.32px;line-height:59.32px;color:#000;font-weight:normal;transform:scaleX(0.9610);transform-origin:center center;">7</div>
<div class="t" style="left:286.70px;width:200px;text-align:center;top:1080px;font-size:24.456px;line-height:24.456px;color:#000;font-weight:normal;transform:scaleX(0.9725);transform-origin:center center;"><span id="o11" class="one">1</span>4:00 - <span id="o12" class="one">1</span>4:45</div>
<div class="t" style="left:462.8px;top:356px;font-size:9.783px;line-height:9.783px;color:#000;font-weight:normal;transform:scaleX(0.9178);transform-origin:left center;">Мз- ЗУЧ</div>
<div class="t" style="left:462.50px;width:200px;text-align:center;top:391px;font-size:24.977px;line-height:24.977px;color:#000;font-weight:normal;transform:scaleX(0.9610);transform-origin:center center;">6 б</div>
<div class="t" style="left:1360.8px;top:356px;font-size:9.783px;line-height:9.783px;color:#000;font-weight:normal;transform:scaleX(0.9178);transform-origin:left center;">Мз- ЗУЧ</div>
<div class="t" style="left:1361.00px;width:200px;text-align:center;top:391px;font-size:24.977px;line-height:24.977px;color:#000;font-weight:normal;transform:scaleX(0.9610);transform-origin:center center;">6 а</div>
<div class="t" style="left:462.8px;top:465px;font-size:9.783px;line-height:9.783px;color:#000;font-weight:normal;transform:scaleX(0.9178);transform-origin:left center;">Хп-Р</div>
<div class="t" style="left:462.50px;width:200px;text-align:center;top:501px;font-size:24.977px;line-height:24.977px;color:#000;font-weight:normal;transform:scaleX(0.9610);transform-origin:center center;">2 б</div>
<div class="t" style="left:1135.8px;top:465px;font-size:9.783px;line-height:9.783px;color:#000;font-weight:normal;transform:scaleX(0.9178);transform-origin:left center;">Мз- ЗУЧ</div>
<div class="t" style="left:1136.50px;width:200px;text-align:center;top:501px;font-size:24.977px;line-height:24.977px;color:#000;font-weight:normal;transform:scaleX(0.9610);transform-origin:center center;">5 а</div>
<div class="t" style="left:1360.8px;top:465px;font-size:9.783px;line-height:9.783px;color:#000;font-weight:normal;transform:scaleX(0.9178);transform-origin:left center;">Мз- ЗУЧ</div>
<div class="t" style="left:1361.00px;width:200px;text-align:center;top:501px;font-size:24.977px;line-height:24.977px;color:#000;font-weight:normal;transform:scaleX(0.9610);transform-origin:center center;">5 а</div>
<div class="t" style="left:462.8px;top:574px;font-size:9.783px;line-height:9.783px;color:#000;font-weight:normal;transform:scaleX(0.9178);transform-origin:left center;">Хп-Р</div>
<div class="t" style="left:462.50px;width:200px;text-align:center;top:610px;font-size:24.977px;line-height:24.977px;color:#000;font-weight:normal;transform:scaleX(0.9610);transform-origin:center center;">2 а</div>
<div class="t" style="left:1135.8px;top:574px;font-size:9.783px;line-height:9.783px;color:#000;font-weight:normal;transform:scaleX(0.9178);transform-origin:left center;">Мз- ЗУЧ</div>
<div class="t" style="left:1136.50px;width:200px;text-align:center;top:610px;font-size:24.977px;line-height:24.977px;color:#000;font-weight:normal;transform:scaleX(0.9610);transform-origin:center center;">5 в</div>
<div class="t" style="left:1360.8px;top:574px;font-size:9.783px;line-height:9.783px;color:#000;font-weight:normal;transform:scaleX(0.9178);transform-origin:left center;">Мз- ЗУЧ</div>
<div class="t" style="left:1361.00px;width:200px;text-align:center;top:610px;font-size:24.977px;line-height:24.977px;color:#000;font-weight:normal;transform:scaleX(0.9610);transform-origin:center center;">6 в</div>
<div class="t" style="left:462.8px;top:682px;font-size:9.783px;line-height:9.783px;color:#000;font-weight:normal;transform:scaleX(0.9178);transform-origin:left center;">Мз- ЗУЧ</div>
<div class="t" style="left:462.50px;width:200px;text-align:center;top:718px;font-size:24.977px;line-height:24.977px;color:#000;font-weight:normal;transform:scaleX(0.9610);transform-origin:center center;">7 б</div>
<div class="t" style="left:686.8px;top:682px;font-size:9.783px;line-height:9.783px;color:#000;font-weight:normal;transform:scaleX(0.9178);transform-origin:left center;">Мз- ЗУЧ</div>
<div class="t" style="left:687.50px;width:200px;text-align:center;top:718px;font-size:24.977px;line-height:24.977px;color:#000;font-weight:normal;transform:scaleX(0.9610);transform-origin:center center;">8 а</div>
<div class="t" style="left:1135.8px;top:682px;font-size:9.783px;line-height:9.783px;color:#000;font-weight:normal;transform:scaleX(0.9178);transform-origin:left center;">Мз- ЗУЧ</div>
<div class="t" style="left:1136.50px;width:200px;text-align:center;top:718px;font-size:24.977px;line-height:24.977px;color:#000;font-weight:normal;transform:scaleX(0.9610);transform-origin:center center;">7 б</div>
<div class="t" style="left:1360.8px;top:682px;font-size:9.783px;line-height:9.783px;color:#000;font-weight:normal;transform:scaleX(0.9178);transform-origin:left center;">Мз- ЗУЧ</div>
<div class="t" style="left:1361.00px;width:200px;text-align:center;top:718px;font-size:24.977px;line-height:24.977px;color:#000;font-weight:normal;transform:scaleX(0.9610);transform-origin:center center;">8 б</div>
<div class="t" style="left:462.8px;top:791px;font-size:9.783px;line-height:9.783px;color:#000;font-weight:normal;transform:scaleX(0.9178);transform-origin:left center;">Хп-Р</div>
<div class="t" style="left:462.50px;width:200px;text-align:center;top:827px;font-size:24.977px;line-height:24.977px;color:#000;font-weight:normal;transform:scaleX(0.9610);transform-origin:center center;">2 в</div>
<div class="t" style="left:686.8px;top:791px;font-size:9.783px;line-height:9.783px;color:#000;font-weight:normal;transform:scaleX(0.9178);transform-origin:left center;">Мз- ЗУЧ</div>
<div class="t" style="left:687.50px;width:200px;text-align:center;top:827px;font-size:24.977px;line-height:24.977px;color:#000;font-weight:normal;transform:scaleX(0.9610);transform-origin:center center;">6 в</div>
<div class="t" style="left:1135.8px;top:791px;font-size:9.783px;line-height:9.783px;color:#000;font-weight:normal;transform:scaleX(0.9178);transform-origin:left center;">Мз- ЗУЧ</div>
<div class="t" style="left:1136.50px;width:200px;text-align:center;top:827px;font-size:24.977px;line-height:24.977px;color:#000;font-weight:normal;transform:scaleX(0.9610);transform-origin:center center;">5 б</div>
<div class="t" style="left:462.8px;top:900px;font-size:9.783px;line-height:9.783px;color:#000;font-weight:normal;transform:scaleX(0.9178);transform-origin:left center;">Мз- ЗУЧ</div>
<div class="t" style="left:462.50px;width:200px;text-align:center;top:936px;font-size:24.977px;line-height:24.977px;color:#000;font-weight:normal;transform:scaleX(0.9610);transform-origin:center center;">6 а</div>
<div class="t" style="left:1360.8px;top:900px;font-size:9.783px;line-height:9.783px;color:#000;font-weight:normal;transform:scaleX(0.9178);transform-origin:left center;">Мз- ЗУЧ</div>
<div class="t" style="left:1361.00px;width:200px;text-align:center;top:936px;font-size:24.977px;line-height:24.977px;color:#000;font-weight:normal;transform:scaleX(0.9610);transform-origin:center center;">7 а</div>
<div class="t" style="left:462.8px;top:1009px;font-size:9.783px;line-height:9.783px;color:#000;font-weight:normal;transform:scaleX(0.9178);transform-origin:left center;">Мз- ЗУЧ</div>
<div class="t" style="left:462.50px;width:200px;text-align:center;top:1045px;font-size:24.977px;line-height:24.977px;color:#000;font-weight:normal;transform:scaleX(0.9610);transform-origin:center center;">9 а</div>
<div class="t" style="left:1360.8px;top:1009px;font-size:9.783px;line-height:9.783px;color:#000;font-weight:normal;transform:scaleX(0.9178);transform-origin:left center;">Мз- ЗУЧ</div>
<div class="t" style="left:1361.00px;width:200px;text-align:center;top:1045px;font-size:24.977px;line-height:24.977px;color:#000;font-weight:normal;transform:scaleX(0.9610);transform-origin:center center;">5 б</div>
<div class="t" style="left:326.5361290322581px;top:1113px;font-size:16.495px;line-height:16.495px;color:#000;font-weight:normal;transform:scaleX(0.9639);transform-origin:left center;">Разписанието е генерирано:<span id="o13" class="one">1</span>0.<span id="o14" class="one">1</span>2.20<span id="o15" class="one">1</span>8 г.</div>
<div class="t" style="left:1365.5px;top:1113px;font-size:16.495px;line-height:16.495px;color:#000;font-weight:normal;transform:scaleX(0.9557);transform-origin:left center;">aSc Разписание на часовете</div>
<div class="r" style="left:617px;top:380px;width:452px;height:334px;box-shadow:0 4px 18px 3px rgba(0,0,0,0.28);"></div>
<div class="r" style="left:617px;top:380px;width:452px;height:334px;background:#f0f0f0;border:1px solid #1883d7"></div>
<div class="r" style="left:618px;top:381px;width:450px;height:25px;background:#fff"></div>
<div class="t" style="left:620.2453271028037px;top:388px;font-size:11.9px;line-height:11.9px;color:#000;font-weight:normal;transform:scaleX(1.0047);transform-origin:left center;-webkit-text-stroke:0.1px currentColor;">Настройки за печат</div>
<svg class="r" style="left:1046px;top:387px;" width="14" height="13" viewBox="0 0 14 13"><path d="M1.5 1L12 11.5M12 1L1.5 11.5" stroke="#222" stroke-width="1.1"/></svg>
<div class="r" style="left:629px;top:423px;width:429px;height:144px;border:1px solid #dcdcdc"></div>
<div class="r" style="left:634px;top:418px;width:40px;height:10px;background:#f0f0f0"></div>
<div class="t" style="left:637.7px;top:419px;font-size:11.1px;line-height:11.1px;color:#000;font-weight:normal;transform:scaleX(0.9636);transform-origin:left center;-webkit-text-stroke:0.1px currentColor;">Хедър</div>
<div class="r" style="left:661px;top:435px;width:139px;height:21px;background:#e1e1e1;border:1px solid #adadad"></div>
<div class="t" style="left:710.0px;top:441px;font-size:11.1px;line-height:11.1px;color:#000;font-weight:normal;-webkit-text-stroke:0.1px currentColor;">Шрифт</div>
<div class="r" style="left:660px;top:465px;width:13px;height:13px;background:#fff;border:1px solid #333"></div>
<svg class="r" style="left:660px;top:465px;" width="13" height="13" viewBox="0 0 13 13"><path d="M2.5 6.5L5.2 9.3L10.5 3.5" fill="none" stroke="#333" stroke-width="1.3"/></svg>
<div class="t" style="left:674.5948051948052px;top:467px;font-size:11.1px;line-height:11.1px;color:#000;font-weight:normal;transform:scaleX(1.0052);transform-origin:left center;-webkit-text-stroke:0.1px currentColor;">Печат префикс</div>
<div class="r" style="left:660px;top:481px;width:209px;height:20px;background:#fff;border:1px solid #7a7a7a"></div>
<div class="t" style="left:666.0px;top:486px;font-size:11.1px;line-height:11.1px;color:#000;font-weight:normal;-webkit-text-stroke:0.1px currentColor;">Учител</div>
<div class="r" style="left:879px;top:482px;width:166px;height:22px;background:#e1e1e1;border:1px solid #adadad"></div>
<div class="t" style="left:927.4px;top:489px;font-size:11.1px;line-height:11.1px;color:#000;font-weight:normal;transform:scaleX(0.9970);transform-origin:left center;-webkit-text-stroke:0.1px currentColor;">Задайте още</div>
<div class="t" style="left:663.0px;top:511px;font-size:11.1px;line-height:11.1px;color:#000;font-weight:normal;-webkit-text-stroke:0.1px currentColor;">Ако оставите това поле празно, софтуерът ще разпечата префикса по</div>
<div class="r" style="left:660px;top:533px;width:348px;height:21px;background:#e5e5e5;border:1px solid #adadad"></div>
<div class="t" style="left:664.4px;top:539px;font-size:10.5px;line-height:10.5px;color:#000;font-weight:normal;transform:scaleX(1.0127);transform-origin:left center;-webkit-text-stroke:0.1px currentColor;">[Фамилия] [Име]</div>
<svg class="r" style="left:992px;top:539px;" width="12" height="9" viewBox="0 0 12 9"><path d="M1 1.8L5.5 6.3L10 1.8" fill="none" stroke="#444" stroke-width="1.1"/></svg>
<div class="r" style="left:654px;top:460px;width:116px;height:46px;border:3px solid #ed1c24"></div>
<div class="r" style="left:629px;top:581px;width:429px;height:56px;border:1px solid #dcdcdc"></div>
<div class="r" style="left:634px;top:576px;width:86px;height:10px;background:#f0f0f0"></div>
<div class="t" style="left:637.7px;top:577px;font-size:11.1px;line-height:11.1px;color:#000;font-weight:normal;transform:scaleX(1.0117);transform-origin:left center;-webkit-text-stroke:0.1px currentColor;">Заглавен текст</div>
<div class="r" style="left:660px;top:599px;width:207px;height:20px;background:#fff;border:1px solid #7a7a7a"></div>
<div class="r" style="left:877px;top:599px;width:165px;height:21px;background:#e1e1e1;border:1px solid #adadad"></div>
<div class="t" style="left:939.2027777777778px;top:605px;font-size:11.1px;line-height:11.1px;color:#000;font-weight:normal;transform:scaleX(0.9972);transform-origin:left center;-webkit-text-stroke:0.1px currentColor;">Шрифт</div>
<div class="r" style="left:632px;top:652px;width:13px;height:13px;background:#fff;border:1px solid #333"></div>
<div class="t" style="left:646.0045454545455px;top:654px;font-size:11.1px;line-height:11.1px;color:#000;font-weight:normal;transform:scaleX(0.9955);transform-origin:left center;-webkit-text-stroke:0.1px currentColor;">Печат на регистрационното име в центъра</div>
<div class="r" style="left:759px;top:683px;width:73px;height:21px;background:#e1e1e1;border:2px solid #0078d7"></div>
<div class="t" style="left:787.4px;top:689px;font-size:11.1px;line-height:11.1px;color:#000;font-weight:normal;transform:scaleX(0.9125);transform-origin:left center;-webkit-text-stroke:0.1px currentColor;">OK</div>
<div class="r" style="left:855px;top:683px;width:73px;height:21px;background:#e1e1e1;border:1px solid #adadad"></div>
<div class="t" style="left:870.5px;top:689px;font-size:11.1px;line-height:11.1px;color:#000;font-weight:normal;transform:scaleX(1.0526);transform-origin:left center;-webkit-text-stroke:0.1px currentColor;">Откажи</div>
<svg style="position:absolute;left:0;top:0" width="1921" height="1200"><path transform="translate(576.14,316) scale(0.01084,-0.01169)" d="M763 0L583 0L583 1147Q518 1085 412 1023Q306 961 223 913L223 1087Q373 1158 485 1254Q597 1350 643 1409L763 1409Z" fill="#000"/><path transform="translate(373.14,424) scale(0.02784,-0.02896)" d="M763 0L583 0L583 1147Q518 1085 412 1023Q306 961 223 913L223 1087Q373 1158 485 1254Q597 1350 643 1409L763 1409Z" fill="#000"/><path transform="translate(316.65,664) scale(0.01161,-0.01194)" d="M763 0L583 0L583 1147Q518 1085 412 1023Q306 961 223 913L223 1087Q373 1158 485 1254Q597 1350 643 1409L763 1409Z" fill="#000"/><path transform="translate(397.25,664) scale(0.01161,-0.01194)" d="M763 0L583 0L583 1147Q518 1085 412 1023Q306 961 223 913L223 1087Q373 1158 485 1254Q597 1350 643 1409L763 1409Z" fill="#000"/><path transform="translate(317.52,773) scale(0.01161,-0.01194)" d="M763 0L583 0L583 1147Q518 1085 412 1023Q306 961 223 913L223 1087Q373 1158 485 1254Q597 1350 643 1409L763 1409Z" fill="#000"/><path transform="translate(398.11,773) scale(0.01006,-0.01194)" d="M763 0L583 0L583 1147Q518 1085 412 1023Q306 961 223 913L223 1087Q373 1158 485 1254Q597 1350 643 1409L763 1409Z" fill="#000"/><path transform="translate(409.57,773) scale(0.01161,-0.01194)" d="M763 0L583 0L583 1147Q518 1085 412 1023Q306 961 223 913L223 1087Q373 1158 485 1254Q597 1350 643 1409L763 1409Z" fill="#000"/><path transform="translate(316.65,882) scale(0.01161,-0.01194)" d="M763 0L583 0L583 1147Q518 1085 412 1023Q306 961 223 913L223 1087Q373 1158 485 1254Q597 1350 643 1409L763 1409Z" fill="#000"/><path transform="translate(397.25,882) scale(0.01161,-0.01194)" d="M763 0L583 0L583 1147Q518 1085 412 1023Q306 961 223 913L223 1087Q373 1158 485 1254Q597 1350 643 1409L763 1409Z" fill="#000"/><path transform="translate(316.65,991) scale(0.01161,-0.01194)" d="M763 0L583 0L583 1147Q518 1085 412 1023Q306 961 223 913L223 1087Q373 1158 485 1254Q597 1350 643 1409L763 1409Z" fill="#000"/><path transform="translate(397.25,991) scale(0.01161,-0.01194)" d="M763 0L583 0L583 1147Q518 1085 412 1023Q306 961 223 913L223 1087Q373 1158 485 1254Q597 1350 643 1409L763 1409Z" fill="#000"/><path transform="translate(316.65,1100) scale(0.01161,-0.01194)" d="M763 0L583 0L583 1147Q518 1085 412 1023Q306 961 223 913L223 1087Q373 1158 485 1254Q597 1350 643 1409L763 1409Z" fill="#000"/><path transform="translate(397.25,1100) scale(0.01161,-0.01194)" d="M763 0L583 0L583 1147Q518 1085 412 1023Q306 961 223 913L223 1087Q373 1158 485 1254Q597 1350 643 1409L763 1409Z" fill="#000"/><path transform="translate(535.68,1127) scale(0.00776,-0.00805)" d="M763 0L583 0L583 1147Q518 1085 412 1023Q306 961 223 913L223 1087Q373 1158 485 1254Q597 1350 643 1409L763 1409Z" fill="#000"/><path transform="translate(557.78,1127) scale(0.00776,-0.00805)" d="M763 0L583 0L583 1147Q518 1085 412 1023Q306 961 223 913L223 1087Q373 1158 485 1254Q597 1350 643 1409L763 1409Z" fill="#000"/><path transform="translate(597.55,1127) scale(0.00776,-0.00805)" d="M763 0L583 0L583 1147Q518 1085 412 1023Q306 961 223 913L223 1087Q373 1158 485 1254Q597 1350 643 1409L763 1409Z" fill="#000"/></svg></body></html>
